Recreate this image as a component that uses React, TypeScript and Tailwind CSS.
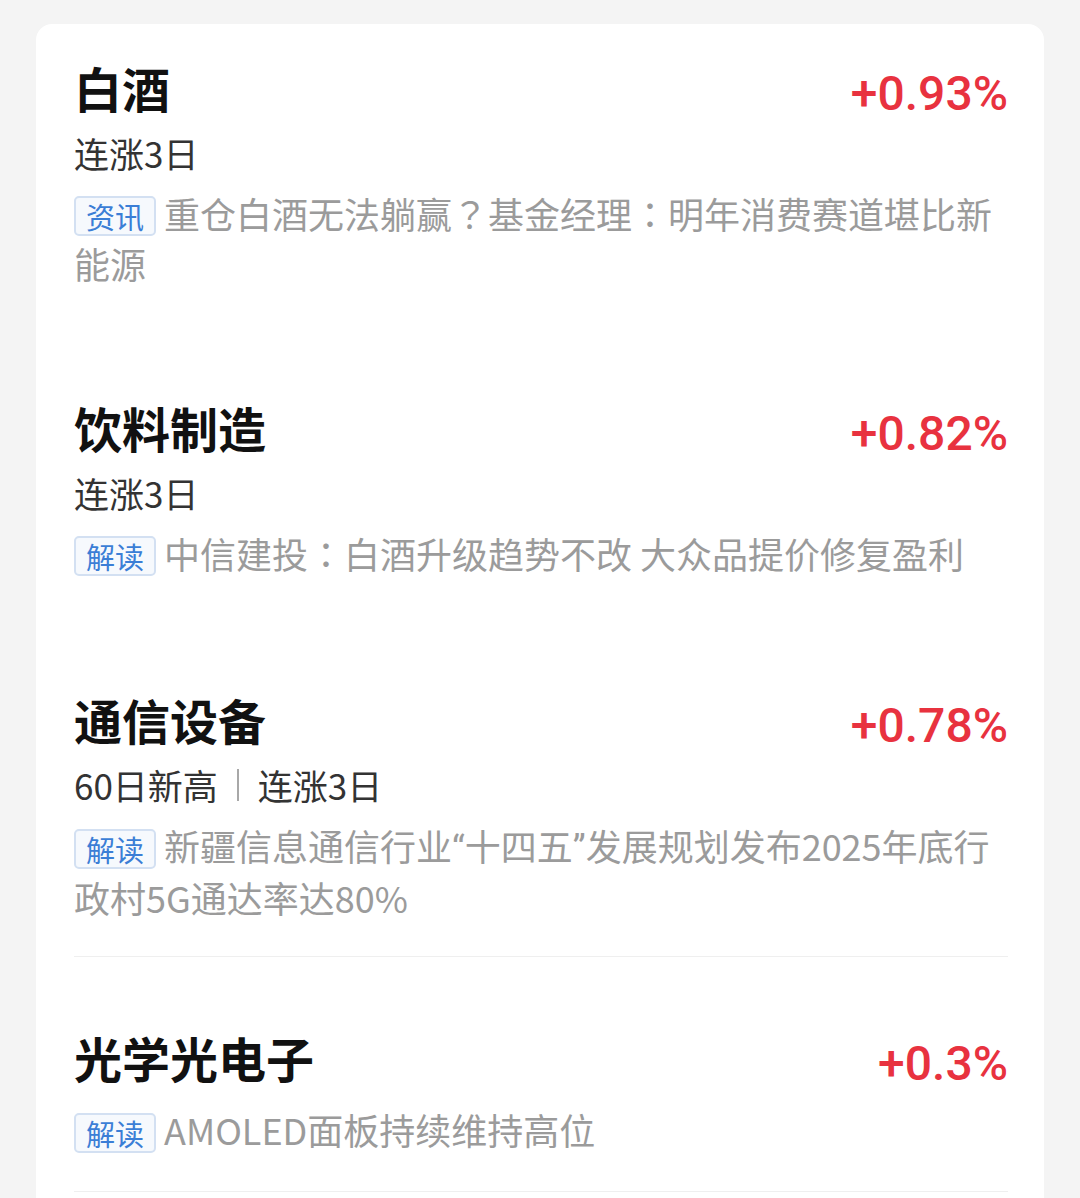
import type { ReactNode } from 'react';

const sectors = [
  {
    name: '白酒',
    change: '+0.93%',
    tags: ['连涨3日'],
    label: '资讯',
    headline: '重仓白酒无法躺赢？基金经理：明年消费赛道堪比新能源',
    divider: false,
  },
  {
    name: '饮料制造',
    change: '+0.82%',
    tags: ['连涨3日'],
    label: '解读',
    headline: '中信建投：白酒升级趋势不改 大众品提价修复盈利',
    divider: false,
  },
  {
    name: '通信设备',
    change: '+0.78%',
    tags: ['60日新高', '连涨3日'],
    label: '解读',
    headline: '新疆信息通信行业“十四五”发展规划发布2025年底行政村5G通达率达80%',
    divider: true,
  },
  {
    name: '光学光电子',
    change: '+0.3%',
    tags: [],
    label: '解读',
    headline: 'AMOLED面板持续维持高位',
    divider: true,
  },
];

// centred full-width punctuation and narrow curly quotes, like the app's system font
const renderHeadline = (text: string): ReactNode[] =>
  text.split(/([？：“”])/).map((part, i) => {
    if (part === '？' || part === '：') {
      return (
        <span key={i} style={{ fontFamily: '"Noto Sans CJK TC", sans-serif' }}>
          {part}
        </span>
      );
    }
    if (part === '“' || part === '”') {
      return (
        <span key={i} style={{ fontFamily: 'Roboto, sans-serif' }}>
          {part}
        </span>
      );
    }
    return part;
  });

const App = () => {
  return (
    <div
      className="min-h-screen bg-[#f4f4f4] pt-[24px] px-[36px]"
      style={{ fontFamily: '"Noto Sans CJK SC", "Noto Sans", sans-serif' }}
    >
      <div className="bg-white rounded-t-[16px] pl-[38px] pr-[36px] min-h-[1200px]">
        {sectors.map((s, i) => (
          <div
            key={s.name}
            className={`${i === 0 ? 'pt-[35px]' : i === 3 ? 'pt-[72px]' : 'pt-[75px]'} ${s.divider ? 'pb-[35px] border-b border-[#efefef]' : 'pb-[37px]'}`}
          >
            {/* title row */}
            <div className="flex items-center justify-between h-[56px]">
              <span className="text-[48px] leading-[56px] font-bold text-[#111]">{s.name}</span>
              <span
                className="text-[48px] leading-[56px] font-medium text-[#e8323f] mt-[14px]"
                style={{ fontFamily: 'Roboto, "Noto Sans", sans-serif' }}
              >
                {s.change}
              </span>
            </div>

            {/* signal row */}
            {s.tags.length > 0 && (
              <div className="flex items-center mt-[14px] h-[48px] text-[35px] leading-[48px] text-[#333]">
                {s.tags.map((t, j) => (
                  <div key={t} className="flex items-center">
                    {j > 0 && <span className="mx-[19px] w-[2px] h-[32px] bg-[#a8a8a8]" />}
                    <span>{t}</span>
                  </div>
                ))}
              </div>
            )}

            {/* news */}
            <div
              className={`${s.tags.length > 0 ? 'mt-[12px]' : 'mt-[20px]'} text-[36px] leading-[48px] text-[#9b9b9b]`}
            >
              <span className="inline-flex items-center justify-center align-middle relative -top-[3px] h-[40px] px-[10px] mr-[8px] rounded-[5px] border-2 border-[#d3e0f2] bg-[#f6f9fd] text-[29px] leading-[36px] text-[#3b7ed6]">
                {s.label}
              </span>
              {renderHeadline(s.headline)}
            </div>
          </div>
        ))}
      </div>
    </div>
  );
};

export default App;
